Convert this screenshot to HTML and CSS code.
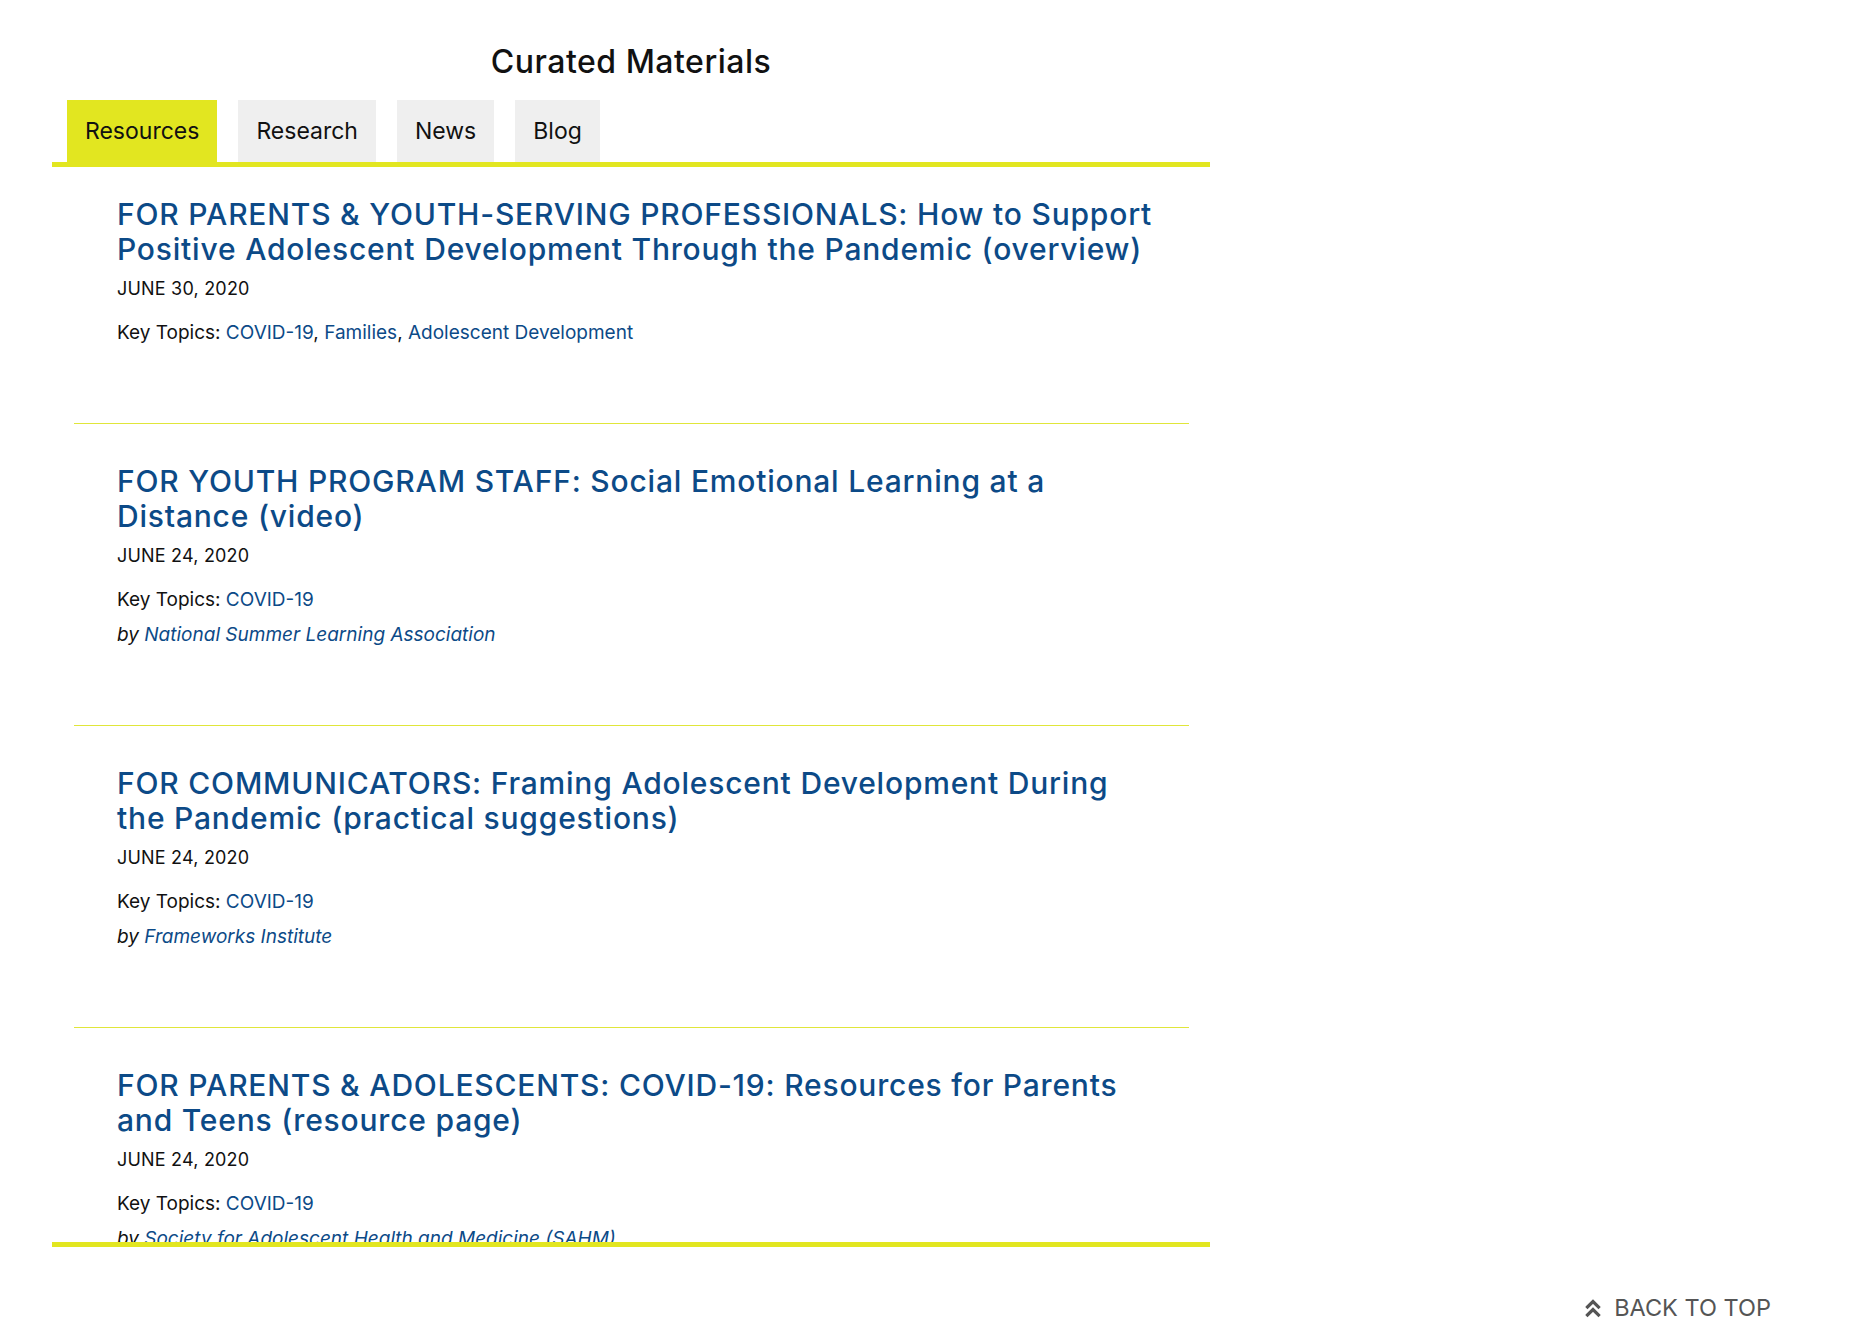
FILE: index.html
```html
<!DOCTYPE html>
<html lang="en">
<head>
<meta charset="utf-8">
<title>Curated Materials</title>
<link rel="stylesheet" href="styles.css">
</head>
<body>
<main class="page">
  <section class="curated">
    <h2 class="curated-title">Curated Materials</h2>
    <nav class="tabs">
      <a class="tab tab-active" href="#">Resources</a>
      <a class="tab" href="#">Research</a>
      <a class="tab" href="#">News</a>
      <a class="tab" href="#">Blog</a>
    </nav>
    <div class="list">
      <article class="item item-first">
        <h3 class="item-title"><a href="#">FOR PARENTS &amp; YOUTH-SERVING PROFESSIONALS: How to Support<br>Positive Adolescent Development Through the Pandemic (overview)</a></h3>
        <p class="item-date">JUNE 30, 2020</p>
        <p class="item-topics">Key Topics: <a href="#">COVID-19</a>, <a href="#">Families</a>, <a href="#">Adolescent Development</a></p>
      </article>
      <article class="item">
        <h3 class="item-title"><a href="#">FOR YOUTH PROGRAM STAFF: Social Emotional Learning at a<br>Distance (video)</a></h3>
        <p class="item-date">JUNE 24, 2020</p>
        <p class="item-topics">Key Topics: <a href="#">COVID-19</a></p>
        <p class="item-by">by <a href="#">National Summer Learning Association</a></p>
      </article>
      <article class="item">
        <h3 class="item-title"><a href="#">FOR COMMUNICATORS: Framing Adolescent Development During<br>the Pandemic (practical suggestions)</a></h3>
        <p class="item-date">JUNE 24, 2020</p>
        <p class="item-topics">Key Topics: <a href="#">COVID-19</a></p>
        <p class="item-by">by <a href="#">Frameworks Institute</a></p>
      </article>
      <article class="item">
        <h3 class="item-title"><a href="#">FOR PARENTS &amp; ADOLESCENTS: COVID-19: Resources for Parents<br>and Teens (resource page)</a></h3>
        <p class="item-date">JUNE 24, 2020</p>
        <p class="item-topics">Key Topics: <a href="#">COVID-19</a></p>
        <p class="item-by">by <a href="#">Society for Adolescent Health and Medicine (SAHM)</a></p>
      </article>
    </div>
  </section>
  <div class="back-row">
    <a class="back-top" href="#">
      <svg class="back-icon" width="16" height="20" viewBox="0 0 16 20" aria-hidden="true">
        <path d="M2.5 9 L8 3.5 L13.5 9" fill="none" stroke="#555" stroke-width="3.2" stroke-linecap="square"/>
        <path d="M2.5 17 L8 11.5 L13.5 17" fill="none" stroke="#555" stroke-width="3.2" stroke-linecap="square"/>
      </svg>
      <span>BACK TO TOP</span>
    </a>
  </div>
</main>
</body>
</html>
```
FILE: styles.css
```css
* { box-sizing: border-box; }
html, body { margin: 0; padding: 0; background: #fff; }
body {
  font-family: Inter, "Noto Sans", sans-serif;
  color: #111;
}
a { text-decoration: none; }

.page {
  width: 1868px;
}

.curated {
  margin-left: 52px;
  width: 1158px;
  padding-top: 44px;
}

.curated-title {
  margin: 0;
  text-align: center;
  font-size: 32px;
  line-height: 36px;
  font-weight: 500;
  letter-spacing: 0.5px;
  color: #111;
}

.tabs {
  display: flex;
  gap: 21px;
  margin-left: 15px;
  margin-top: 20px;
}
.tab {
  display: flex;
  align-items: center;
  height: 62px;
  padding: 0 18px;
  background: #efefef;
  color: #111;
  font-size: 23px;
}
.tab-active { background: #e2e620; }

.list {
  height: 1085px;
  overflow: hidden;
  border-top: 5px solid #e2e620;
  border-bottom: 5px solid #e2e620;
}

.item {
  margin: 0 21px 0 22px;
  padding: 40px 0 78px 43px;
  border-bottom: 1px solid #e0e63a;
}
.item-first { padding-top: 30px; }

.item-title {
  margin: 0;
  font-size: 30px;
  line-height: 34.5px;
  font-weight: 500;
  letter-spacing: 0.8px;
  white-space: nowrap;
}
.item-title a { color: #0c4a87; }

.item-date {
  margin: 11px 0 0;
  font-size: 18px;
  line-height: 24px;
  letter-spacing: 0.2px;
  color: #111;
}
.item-topics {
  margin: 20px 0 0;
  font-size: 19px;
  line-height: 24px;
  color: #111;
}
.item-topics a, .item-by a { color: #0c4a87; }
.item-by {
  margin: 11px 0 0;
  font-size: 19px;
  line-height: 24px;
  font-style: italic;
  color: #111;
}

.back-row {
  display: flex;
  justify-content: flex-end;
  padding-right: 97px;
  margin-top: 48px;
}
.back-top {
  display: flex;
  align-items: center;
  gap: 13px;
  color: #555;
  font-size: 23.5px;
  line-height: 26px;
}
```
